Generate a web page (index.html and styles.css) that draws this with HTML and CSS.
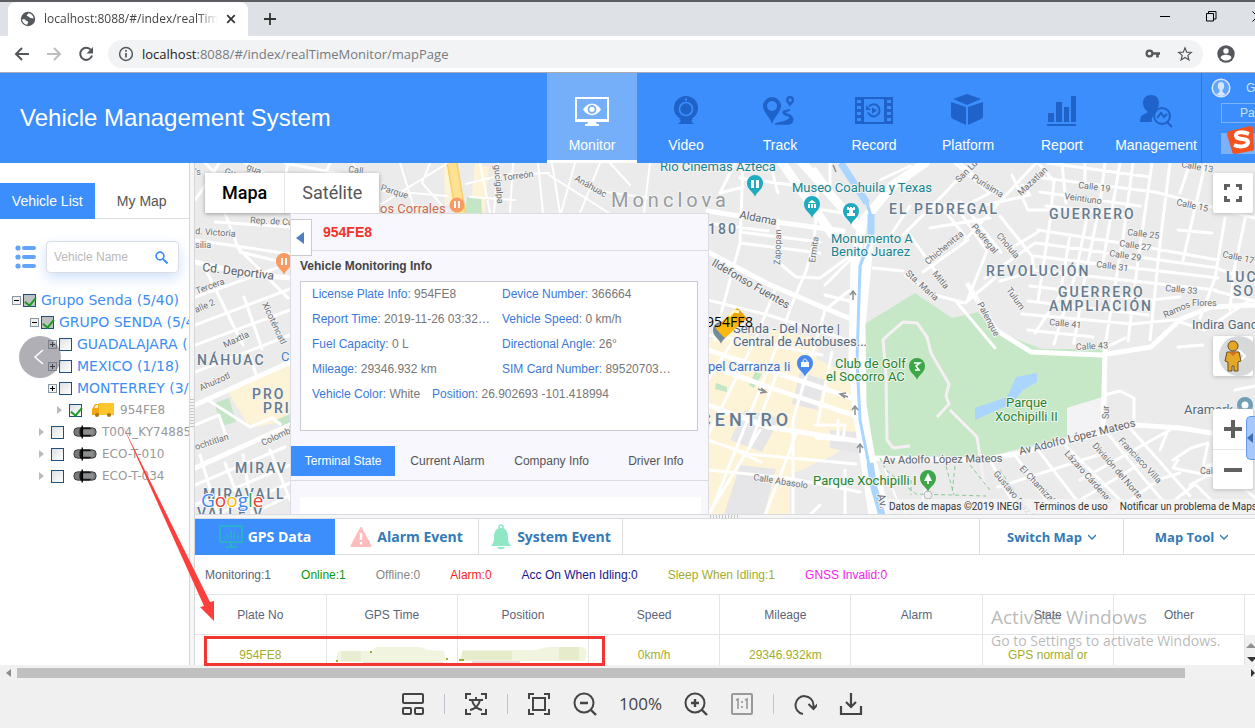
FILE: index.html
```html
<!DOCTYPE html>
<html lang="en">
<head>
<meta charset="utf-8">
<title>Vehicle Management System</title>
<link rel="stylesheet" href="styles.css">
</head>
<body>
<div class="tabstrip">
  <div class="tabstrip-edge"></div>
  <div class="browser-tab">
    <svg class="globe" width="16" height="16" viewBox="0 0 16 16"><circle cx="8" cy="8" r="7.200" fill="#54585c"/><path d="M2.200 8.500c1.600-.6 3-.2 3.800 1 .6 1 2 .4 2.200 1.600.1 1-1 1.400-.8 2.700-3-.3-5.200-2.600-5.200-5.300zM8.500 2.200c-.2 1-1.600 1-1.800 2 0 1.400 2.200.8 2.800 2 .6 1.400 2.400.6 4.100 1.400C13.400 4.600 11.500 2.400 8.500 2.200z" fill="#fff"/></svg>
    <span class="tab-title">localhost:8088/#/index/realTimeM</span>
    <button class="plain" aria-label="Close tab"><svg width="10" height="10" viewBox="0 0 10 10"><path d="M1.200 1.200l7.600 7.600M8.800 1.200L1.200 8.800" stroke="#333" stroke-width="1.700"/></svg></button>
  </div>
  <button class="plain new-tab" aria-label="New tab"><svg width="12" height="12" viewBox="0 0 12 12"><path d="M6 0v12M0 6h12" stroke="#333" stroke-width="1.800"/></svg></button>
  <div class="window-buttons">
    <button class="plain" aria-label="Minimize"><svg width="11" height="11" viewBox="0 0 11 11"><path d="M0 5.500h10" stroke="#000"/></svg></button>
    <button class="plain" aria-label="Restore"><svg width="11" height="11" viewBox="0 0 11 11"><path d="M.5 2.500h7v7.500h-7zM2.500 2.500v-2h7.500v7.500H7.500" fill="none" stroke="#000"/></svg></button>
    <button class="plain" aria-label="Close window"><svg width="11" height="11" viewBox="0 0 11 11"><path d="M.5.5l10 10M10.500.5l-10 10" stroke="#000"/></svg></button>
  </div>
</div>
<div class="toolbar">
  <button class="plain" aria-label="Back"><svg width="16" height="16" viewBox="0 0 16 16"><path d="M15 8H2.500M8 2L2 8l6 6" fill="none" stroke="#54585c" stroke-width="2"/></svg></button>
  <button class="plain" aria-label="Forward"><svg width="16" height="16" viewBox="0 0 16 16"><path d="M1 8h12.500M8 2l6 6-6 6" fill="none" stroke="#bbbdbf" stroke-width="2"/></svg></button>
  <button class="plain" aria-label="Reload"><svg width="16" height="16" viewBox="0 0 16 16"><path d="M13 4.200A6 6 0 1 0 14 9.500" fill="none" stroke="#54585c" stroke-width="2"/><path d="M15 1v6.500H8.500z" fill="#54585c"/></svg></button>
  <div class="address">
    <svg width="16" height="16" viewBox="0 0 16 16"><circle cx="8" cy="8" r="6.400" fill="none" stroke="#54585c" stroke-width="1.500"/><path d="M8 7v4.500M8 4v1.700" stroke="#54585c" stroke-width="1.700"/></svg>
    <span class="url"><b>localhost</b>:8088/#/index/realTimeMonitor/mapPage</span>
    <svg width="16" height="10" viewBox="0 0 16 10"><circle cx="4.500" cy="4.500" r="2.900" fill="none" stroke="#54585c" stroke-width="2.200"/><path d="M7 4.500h8M12.500 4v4.500" stroke="#54585c" stroke-width="2.600"/></svg>
    <svg width="16" height="16" viewBox="0 0 16 16"><path d="M8 1.800l1.700 4.300 4.600.3-3.500 3 1.100 4.500L8 11.500l-3.900 2.400 1.100-4.500-3.500-3 4.600-.3z" fill="none" stroke="#54585c" stroke-width="1.200"/></svg>
  </div>
  <svg class="profile" width="18" height="18" viewBox="0 0 18 18"><circle cx="9" cy="9" r="8.700" fill="#54585c"/><circle cx="9" cy="6" r="2.700" fill="#fff"/><path d="M3.600 13c0-4.300 10.800-4.300 10.800 0-2.700 3.400-8.100 3.400-10.800 0z" fill="#fff"/></svg>
</div>

<header class="app-header">
  <h1>Vehicle Management System</h1>
  <nav>
    <a class="nav-item active" href="#monitor"><svg width="36" height="36" viewBox="0 0 36 36"><path d="M2 5h32v23H2z" fill="none" stroke="#fff" stroke-width="2"/><path d="M2 26h32v2.500H2zM15 28h6l2 3h2v2H11v-2h2z" fill="#fff"/><path d="M9 16.500c5-8 13-8 18 0-5 7.500-13 7.500-18 0z" fill="#fff"/><circle cx="18" cy="16.300" r="3.500" fill="none" stroke="#74aff9" stroke-width="1.800"/></svg>Monitor</a>
    <a class="nav-item" href="#video"><svg width="36" height="36" viewBox="0 0 36 36"><circle cx="18" cy="15" r="12" fill="#1f62c9"/><circle cx="18" cy="16" r="6.500" fill="none" stroke="#3b8efb" stroke-width="1.700"/><circle cx="18" cy="6.500" r="1.200" fill="#3b8efb"/><path d="M11 26h14l-2 2 3 3H10l3-3z" fill="#1f62c9"/></svg>Video</a>
    <a class="nav-item" href="#track"><svg width="36" height="36" viewBox="0 0 36 36"><path fill-rule="evenodd" d="M10 31C8 24 1 19 1 13a9 9 0 0 1 18 0c0 6-7 11-9 18zM10 8a5 5 0 1 0 .1 0zM28 14c-1-3-4-4-4-7a3.900 3.900 0 0 1 8 0c0 3-3 4-4 7zM28 5.200a1.800 1.800 0 1 0 .1 0z" fill="#1f62c9"/><path d="M28 17c-12 1-6 5-1 6 4 2-2 6-14 8h13c6-1 6-7 1-9-6-2-6-3 1-5z" fill="#1f62c9" stroke="#1f62c9" stroke-width="1.500"/></svg>Track</a>
    <a class="nav-item" href="#record"><svg class="wide" width="38" height="36" viewBox="0 0 38 36"><path fill-rule="evenodd" d="M0 4h38v27H0zM9 6v23h20V6zM2 7v3h4V7zM2 13v3h4v-3zM2 19v3h4v-3zM2 25v3h4v-3zM32 7v3h4V7zM32 13v3h4v-3zM32 19v3h4v-3zM32 25v3h4v-3z" fill="#1f62c9"/><path d="M14 13.500a6 6 0 1 1-1 6" fill="none" stroke="#1f62c9" stroke-width="2"/><path d="M11 12v5h5zM17 14.500v6l5-3z" fill="#1f62c9"/></svg>Record</a>
    <a class="nav-item" href="#platform"><svg width="36" height="36" viewBox="0 0 36 36"><path d="M17 1l14 5-14 6L3 6zM1 9l15 5v18L3 26c-2-1-2-2-2-4zM33 9l-15 5v18l13-6c2-1 2-2 2-4z" fill="#1f62c9"/></svg>Platform</a>
    <a class="nav-item" href="#report"><svg width="36" height="36" viewBox="0 0 36 36"><path d="M4 20h6v9H4zM12 9h6v20h-6zM20 14h5v15h-5zM27 3h5v26h-5zM3 31h29v2H3z" fill="#1f62c9"/></svg>Report</a>
    <a class="nav-item" href="#management"><svg width="36" height="36" viewBox="0 0 36 36"><path d="M13 2c5 0 8 3 8 8 0 4-2 7-3 9-3 2-5 7-4 10H2c0-8 4-7 8-10-3-2-5-5-5-9 0-5 3-8 8-8z" fill="#1f62c9"/><circle cx="24" cy="23" r="8" fill="none" stroke="#1f62c9" stroke-width="2"/><path d="M19 25l4-5 3 4 3-3M29 29l5 5" stroke="#1f62c9" stroke-width="2" fill="none"/></svg>Management</a>
  </nav>
  <div class="user-area">
    <div class="user-row"><svg width="20" height="20" viewBox="0 0 20 20"><circle cx="10" cy="10" r="8.800" fill="#63a5fb" stroke="#d5e5fb" stroke-width="1.600"/><ellipse cx="10" cy="8" rx="3.200" ry="4" fill="#d5e5fb"/><path d="M8.500 11h3v3l3 2c-3 2.500-6 2.500-9 0l3-2z" fill="#d5e5fb"/></svg><span>Grupo</span></div>
    <button class="pass">Password</button>
    <div class="ime"><svg width="28" height="28" viewBox="0 0 28 28"><path d="M4 5L24 0c2 0 3 1 3 3l1 19c0 2-1 3-3 3L9 28c-2 0-3-1-3-3L1 9c0-2 1-4 3-4z" fill="#f4511e"/><path d="M23 8c-6-3-14-2-13 2 1 5 12 1 12 6 0 4-7 6-14 3" fill="none" stroke="#fff" stroke-width="4"/></svg></div>
  </div>
</header>

<main class="app">
  <aside class="sidebar">
    <div class="side-tabs"><button class="on">Vehicle List</button><button>My Map</button></div>
    <div class="search-row">
      <svg width="22" height="24" viewBox="0 0 22 24"><g fill="#62a3fb"><circle cx="3" cy="3" r="2.600"/><circle cx="3" cy="12" r="2.600"/><circle cx="3" cy="21" r="2.600"/><rect x="7" y="1" width="14" height="4" rx="2"/><rect x="7" y="10" width="14" height="4" rx="2"/><rect x="7" y="19" width="14" height="4" rx="2"/></g></svg>
      <div class="search"><input type="text" placeholder="Vehicle Name" aria-label="Vehicle Name"><button class="plain" aria-label="Search"><svg width="13" height="13" viewBox="0 0 13 13"><circle cx="5" cy="5" r="3.900" fill="none" stroke="#3b8efb" stroke-width="1.700"/><path d="M8 8l4.500 4.500" stroke="#3b8efb" stroke-width="2"/></svg></button></div>
    </div>
    <div class="tree">
      <div class="node l1"><i class="exp minus"></i><input type="checkbox" id="t1" class="grey" checked><label for="t1">Grupo Senda (5/40)</label></div>
      <div class="node l2"><i class="exp minus"></i><input type="checkbox" id="t2" class="grey" checked><label for="t2">GRUPO SENDA (5/40)</label></div>
      <div class="node l3"><i class="exp"></i><input type="checkbox" id="t3"><label for="t3">GUADALAJARA (1/8)</label></div>
      <div class="node l3"><i class="exp"></i><input type="checkbox" id="t4"><label for="t4">MEXICO (1/18)</label></div>
      <div class="node l3"><i class="exp"></i><input type="checkbox" id="t5"><label for="t5">MONTERREY (3/14)</label></div>
      <div class="node car l4"><i class="tri"></i><input type="checkbox" id="t6" checked><svg width="24" height="16" viewBox="0 0 24 16"><path d="M8 1h15v12H8z" fill="#fdc62d"/><path d="M1 13V7l3-5h4v11z" fill="#f3aa12"/><path d="M3 6l2-3h2v3z" fill="#fff3c4"/><circle cx="6" cy="13" r="2" fill="#a8770a"/><circle cx="18" cy="13" r="2" fill="#a8770a"/></svg><label for="t6">954FE8</label></div>
      <div class="node car"><i class="tri"></i><input type="checkbox" id="t7"><svg width="24" height="14" viewBox="0 0 26 14"><use href="#car"/></svg><label for="t7">T004_KY74885</label></div>
      <div class="node car"><i class="tri"></i><input type="checkbox" id="t8"><svg width="24" height="14" viewBox="0 0 26 14"><use href="#car"/></svg><label for="t8">ECO-T-010</label></div>
      <div class="node car"><i class="tri"></i><input type="checkbox" id="t9"><svg width="24" height="14" viewBox="0 0 26 14"><use href="#car"/></svg><label for="t9">ECO-T-034</label></div>
    </div>
    <button class="collapse" aria-label="Previous"><svg width="12" height="18" viewBox="0 0 12 18"><path d="M10 2L2 9l8 7" fill="none" stroke="#fff" stroke-width="1.600"/></svg></button>
  </aside>
  <div class="vsplit"><i></i></div>

  <section class="content">
    <div class="map">
      <svg class="map-art" viewBox="195 163 1060 352" preserveAspectRatio="xMinYMin slice">
        <defs>
          <g id="car"><rect x="1" y="2.500" width="24" height="9" rx="4" fill="#77797b" stroke="#333"/><path d="M8 2h10l2 2v6l-2 2H8l-1-3V5z" fill="#161616"/><rect x="11" y="4" width="11" height="6" fill="#8b8d8f"/><path d="M10 0v14" stroke="#000" stroke-width="1.500"/></g>
          <path id="pin" d="M0 13C-1 8-8 6-8-1a8 8 0 0 1 16 0C8 6 1 8 0 13z"/>
        </defs>
        <rect x="195" y="163" width="1060" height="352" fill="#ebebeb"/>
        <path d="M228 392l62-30v58l-40 8zM475 163l14 4-5 50-14-4zM444 163h9l4 42h-12zM708 340l30-8 60 18 52 25 6 60-22 20-44 20v40h-82zM718 326l30 10-8 20-32-10zM770 330l50 8-4 24-50-10z" fill="#fdf3d7"/>
        <path d="M745 410l35 8-18 34-32-12zM800 372l25 8-8 30-25-6zM740 465l36 4-12 46h-40zM830 430l26 2 6 22-32-6z" fill="#e6e6e8"/>
        <path d="M214 403l15-5 7 24-14 4zM276 420l14-6v14l-8-2zM467 197h14l1 16h-17zM755 372l7 2-8 14-5-3zM716 383l11 4v5l-12-3z" fill="#c4e5c6"/>
        <path d="M915 293l-52 32 1 60 4 40 8 32 50 2 60-2 81-20v-29l36-11 2-48h-63l-49-19-15-18-26 6z" fill="#c6e8c7"/>
        <path d="M1067 408l36-11v32l-36 8z" fill="#f3f3f5"/>
        <path d="M975 408l32-11 9-20 21-4v9l-14 8-10 13-38 17z" fill="#a9d5fe"/>
        <g fill="none" stroke="#fff" stroke-linejoin="round" stroke-linecap="round" stroke-width="3">
          <path d="M195 200l14-20 10-17M222 205l16 43 50 50M205 268l38 77M215 222l75 5M195 240l95 14M240 252l50 12M195 297l90-32M195 325l95-36M195 345l95-35M195 372l95-37M208 400l42 27 22-9 8 6M262 349l-18-52M257 377l-7-20M195 425l24-10 8 24M243 455l10 60M225 463l20 52M195 485l90-38M195 505l95-40M215 515l75-32M250 515l40-20M270 450l20 50M200 455l18 60M205 163l20 20M245 163l22 12M285 163l60 12M288 163l-10 50M330 163l-20 50"/>
          <path d="M353 163l32 48M380 205l68-42M377 190l70 6M400 163l14 45M430 163l-8 20 25 28M466 184l40-10 43-1M470 197l45 3M498 163l-4 50M513 163l-3 50M538 163l5 50M552 163l8 50M575 163l-14 50M549 175l60 38M600 163l-20 50M610 163l20 22M650 163l-6 50M590 190l60 8M480 163l10 50" stroke-width="2"/>
          <path d="M743 163l-3 80-18 67-7 30M770 163l8 30M818 185l-4 58-8 28-14 33-22 60-40 100-20 50M778 220v42l18 15 24 1 30-22M740 232l80 10M740 243l80 10M708 223l60 8M708 300l60 15 90 28M708 335l54 8 60 12M735 163l-15 30 23-6M740 178l60 8M810 208l40 6M850 290l-25 20-10 35M825 295l32 8M815 345l-22 75v95M775 290l-20 50-47 95M855 255l-30 30M708 440l40 14 108 10M708 470l80 8 72 14M760 430l-52 85M832 352l-14 70M797 432l-32 83M735 450l26 12M838 420v20M815 425h30l-2 15-27-2M740 330l-32 50M780 365l-30 80M820 505l-10 10M845 470v45M830 163v36"/>
          <path d="M873 268l30 3M903 235l40-40 30-32M910 206l-20 30-22 10M910 235l35 50M905 275l30 20 30 8 30-25M944 210l24 30-45 32M926 210l35-8 40 50M955 205l32 46-20 50M955 163l35 30-40 20M965 240l55-60 16-17M985 205l45-10-8-10M1000 216l32 40 2 15-34 10M985 278l50-35M955 300l40 48M1008 250l30-18M990 190l-30-27M1012 175l16 35h40M1038 163l16 18-4 40-12 80M1062 163l4 40M1085 163v20M880 180l30-14M990 218l-60 10"/>
          <path d="M1105 163l-5 40-16 80-10 60M1133 163l-10 75-18 108v60M1152 163l-14 98-10 80M1170 163l-10 80-10 97M1088 212l-12 60-22 72M1070 235l-10 60-25 38M1120 163l-18 105M1035 177l120 15 100 26M1040 192l100 14M1048 163l102 14M1046 206l84 9M1038 230l90 14 90 16M1036 243l182 25M1034 256l184 22M1032 270l184 20M1030 286l120 14 30-3M1028 301l120 14M1022 314l110 10 50-5M1028 330l65 7M1190 163l-10 30M1205 165l-22 95M1225 218l-10 60-15 40M1178 230l34 3M1246 215l-12 55-4 40M1216 268l39 14M1215 291l40 10"/>
          <path d="M1105 348l20-10M1250 300l-45 30-25-8M1203 345l-25 2M1105 395l15-4 14 7v25M1168 430l-8 20M1105 430l40 50 30 35M1130 428l60 68M1060 440l60 60M1038 450l50 65M1015 455l38 55M990 460l24 45M998 487l100-32M1080 480l90-50M1080 500l60-36M1235 390l20-4M1173 460l18-12 17-5-5 24 18-5-10 14-38-8 5-8M1190 485l32-17 33 30M1175 500l20-16 20 20M1110 515l50-36 20-6"/>
          <path d="M885 470l12 30 10 15M925 490l-6 25" stroke-width="2"/>
          <g stroke-width="5"><path d="M195 262l50 12 45 4M195 405l100-45M195 468l95-43M708 211l75 12 60 8M708 252l60 32 90 38M708 365l60 22 85 28M708 405l60 22 90 14M815 170l40 55M968 285l28 45 35 22 70 3 50-8 30-28 30-12 44-2M1105 350l-2 80M868 458l117 2 40-8 110-27 45 3 75 12M708 350l150 50"/></g>
          <g stroke-width="9"><path d="M800 160l58 66M925 163l-32 22-30 36-8 40-2 100 4 50 8 50 8 54M869 245l-8 80 1 80 8 50 16 60M780 160l52 74"/></g>
        </g>
        <path d="M452 163l9 52" stroke="#f6cf69" stroke-width="11"/><path d="M452 163l9 52" stroke="#fde293" stroke-width="8"/>
        <path d="M841 163l9 16 17 24 5 17v16l-12 30-3 94 3 60 6 30 7 35 10 30" fill="none" stroke="#a9d5fe" stroke-width="3"/><path d="M841 163l26 40M871 214v20M870 463l4 25 8 27" stroke="#a9d5fe" stroke-width="7" fill="none"/>
        <path d="M893 448l17-2M893 448l-6-8-1-65-3-35 7-7 13-11 14 1 10 14 4 16 18 31-3 12 3 8-12 13M950 410l27 27 7 46" fill="none" stroke="#f6f0f5" stroke-width="3"/>
        <path d="M880 458l6 12 30 24 70 2M946 466l8 29M955 466l-3 28M970 465l20 25M911 480v15M1000 470l20 30M890 500l15 15" fill="none" stroke="#86c996" stroke-dasharray="4 3"/><circle cx="928" cy="495" r="4" fill="#eee" stroke="#bbb"/>
        <g stroke="#8b8f94" fill="none" stroke-width="1.500"><path d="M853 300v-9m-3 4l3-4 3 4M855 415v-9m-3 4l3-4 3 4M860 453v-9m-3 4l3-4 3 4M758 389l8 3m-5-4l5 4-6 1M848 397l-8-3m5 4l-5-4 6-1M836 172l-3-7"/></g>
        <g class="street">
          <text x="224" y="174" transform="rotate(15 224 174)">Gu</text><text x="246" y="169" transform="rotate(22 246 169)">gua</text><text x="195" y="175">'s</text>
          <text x="348" y="172" transform="rotate(8 348 172)">Call</text><text x="380" y="190" transform="rotate(18 380 190)">Parque</text><text x="503" y="181" transform="rotate(-8 503 181)">Torreón</text><text x="574" y="180" transform="rotate(30 574 180)">Anáhuac</text><text x="494" y="165" transform="rotate(85 494 165)">gucigalpa</text>
          <text x="250" y="223" transform="rotate(3 250 223)">Rep. de Cuba</text><text x="195" y="234" transform="rotate(4 195 234)">d. Victoria</text><text x="195" y="248">silia</text><text x="197" y="294" transform="rotate(-20 197 294)">Tercera</text><text x="196" y="313" transform="rotate(-24 196 313)">alle 2</text><text x="262" y="304" transform="rotate(65 262 304)">Xicoténcatl</text><text x="225" y="348" transform="rotate(-25 225 348)">Maxtla</text><text x="201" y="391" transform="rotate(-24 201 391)">Ahuizotl</text><text x="196" y="450" transform="rotate(-18 196 450)">ochtitlan</text><text x="263" y="446" transform="rotate(-25 263 446)">Colombia</text>
          <text x="780" y="265" transform="rotate(-88 780 265)">Zapopan</text><text x="815" y="263" transform="rotate(-82 815 263)">Ermita</text><text x="753" y="480" transform="rotate(9 753 480)">Calle Abasolo</text>
          <text x="959" y="183" transform="rotate(-45 959 183)">San Luis</text><text x="971" y="179" transform="rotate(32 971 179)">Purísima</text><text x="1021" y="196" transform="rotate(-43 1021 196)">Mazatlan</text><text x="971" y="227" transform="rotate(50 971 227)">Pedregal</text><text x="996" y="236" transform="rotate(50 996 236)">Cholula</text><text x="928" y="265" transform="rotate(-40 928 265)">Chichenitza</text><text x="932" y="274" transform="rotate(50 932 274)">Mitla</text><text x="905" y="274" transform="rotate(42 905 274)">Sta. María</text><text x="977" y="304" transform="rotate(62 977 304)">Palenque</text><text x="1006" y="290" transform="rotate(55 1006 290)">Tulum</text>
          <text x="1078" y="188" transform="rotate(7 1078 188)">Calle 19</text><text x="1064" y="199" transform="rotate(8 1064 199)">Veintiuno</text><text x="1181" y="167" transform="rotate(10 1181 167)">Calle 13</text><text x="1176" y="205" transform="rotate(12 1176 205)">Calle 15</text><text x="1127" y="235" transform="rotate(7 1127 235)">Calle 25</text><text x="1119" y="246" transform="rotate(9 1119 246)">Calle 27</text><text x="1109" y="256" transform="rotate(9 1109 256)">Calle 29</text><text x="1096" y="267" transform="rotate(8 1096 267)">Calle 31</text><text x="1222" y="257" transform="rotate(12 1222 257)">Calle 17</text><text x="1165" y="291" transform="rotate(6 1165 291)">Calle 33</text><text x="1049" y="325" transform="rotate(6 1049 325)">Calle 41</text><text x="1076" y="350" transform="rotate(-3 1076 350)">Calle 43</text><text x="1165" y="318" transform="rotate(-24 1165 318)">Ramos</text><text x="1192" y="306">Flores</text><text x="1109" y="419" transform="rotate(-90 1109 419)">Sur</text>
          <text x="993" y="474" transform="rotate(50 993 474)">Gustavo Díaz O.</text><text x="1019" y="469" transform="rotate(47 1019 469)">El Chamizal</text><text x="1064" y="454" transform="rotate(48 1064 454)">Lázaro Cárdenas</text><text x="1092" y="446" transform="rotate(49 1092 446)">División del Norte</text><text x="1118" y="441" transform="rotate(47 1118 441)">Francisco Villa</text><text x="1200" y="474">Calle</text>
        </g>
        <g class="road"><text x="202" y="271" transform="rotate(7 202 271)" class="s12">Cd. Deportiva</text><text x="739" y="218" transform="rotate(11 739 218)">Aldama</text><text x="711" y="265" transform="rotate(30 711 265)">Ildefonso Fuentes</text><text x="883" y="464" transform="rotate(-1 883 464)">Av Adolfo López Mateos</text><text x="1020" y="455" transform="rotate(-14 1020 455)">Av Adolfo López Mateos</text><text x="877" y="495" transform="rotate(75 877 495)">Av.</text></g>
        <g class="area"><text x="889" y="214">EL PEDREGAL</text><text x="1049" y="219">GUERRERO</text><text x="986" y="276">REVOLUCIÓN</text><text x="1058" y="297">GUERRERO</text><text x="1049" y="311">AMPLIACIÓN</text><text x="1226" y="282">LUCIO</text><text x="1233" y="296">SOTO</text><text x="708" y="234">180</text><text x="197" y="365">NÁHUAC</text><text x="252" y="399">PRO</text><text x="263" y="413">PRI</text><text x="235" y="473">MIRAV</text><text x="203" y="499">MIRAVALL</text><text x="197" y="518">VALLE V</text></g>
        <text class="city" x="611" y="207">Monclova</text><text class="centre" x="699" y="426">CENTRO</text>
        <g class="poi"><text x="660" y="171">Rio Cinemas Azteca</text><text x="792" y="192">Museo Coahuila y Texas</text><text x="831" y="243">Monumento A</text><text x="831" y="256">Benito Juarez</text>
          <g fill="#55697c"><text x="733" y="333">Senda - Del Norte |</text><text x="733" y="346">Central de Autobuses...</text><text x="1192" y="329">Indira Gandhi</text><text x="1184" y="414">Aramark</text></g>
          <text x="281" y="361" fill="#4a7fc0">C</text><text x="708" y="371" fill="#3f75c4">pel Carranza Ii</text><text x="380" y="213" fill="#c8694c">os Corrales</text>
          <g fill="#25852c"><text x="835" y="368">Club de Golf</text><text x="826" y="381">el Socorro AC</text><text x="1006" y="407">Parque</text><text x="995" y="421">Xochipilli II</text><text x="813" y="485">Parque Xochipilli I</text></g></g>
        <g fill="#1fabbf"><use href="#pin" x="755" y="184"/><use href="#pin" x="812" y="205"/><use href="#pin" x="851" y="212"/></g>
        <path d="M751 180h3v8h-3zM756 180h3v8h-3zM808 203l4-3 4 3zM808 204h2v4h-2zM811 204h2v4h-2zM814 204h2v4h-2zM847 207h2v1h1v-1h2v1h1v-1h2v3h-2v3h2v3h-8v-3h2v-3h-2z" fill="#fff"/>
        <use href="#pin" x="805" y="364" fill="#4688ee"/><path d="M801 362h8v5h-8z" fill="#fff"/><path d="M803 362c0-4 4-4 4 0" fill="none" stroke="#fff"/>
        <g fill="#3ca648"><use href="#pin" x="917" y="367"/><use href="#pin" x="928" y="479"/></g><path d="M914 363h6l-4 3 3 4h-4" fill="none" stroke="#fff" stroke-width="1.500"/><path d="M928 473l4 8h-3v3h-2v-3h-3z" fill="#fff"/>
        <use href="#pin" x="721" y="331" fill="#718b9a"/><use href="#pin" x="1245" y="406" fill="#6f9fb5"/><circle cx="1245" cy="405" r="3.500" fill="#fff"/>
        <circle cx="457" cy="205" r="7.500" fill="#f89a61"/><use href="#pin" x="284" y="262" fill="#f89a61"/><path d="M455 201v7M459 201v7M282 258v7M286 258v7" stroke="#fff" stroke-width="2"/>
        <g transform="rotate(-42 731 323)"><rect x="716" y="316" width="30" height="14" rx="2" fill="#fbb90f"/><rect x="737" y="316" width="9" height="14" rx="2" fill="#e8a20b"/></g><path d="M729 316l5-5 5 1" stroke="#fff6c0" stroke-width="3" fill="none"/>
        <text class="plate" x="706" y="327">954FE8</text>
        <text class="google" x="201" y="507"><tspan fill="#4285f4">G</tspan><tspan fill="#ea4335">o</tspan><tspan fill="#fbbc05">o</tspan><tspan fill="#4285f4">g</tspan><tspan fill="#34a853">l</tspan><tspan fill="#ea4335">e</tspan></text>
      </svg>
      <div class="map-type"><button class="on">Mapa</button><button>Satélite</button></div>
      <div class="map-ctl fullscreen"><button class="plain" aria-label="Fullscreen"><svg width="18" height="18" viewBox="0 0 18 18"><path d="M1.500 6V1.500H6M12 1.500h4.500V6M16.500 12v4.500H12M6 16.500H1.500V12" fill="none" stroke="#606060" stroke-width="3"/></svg></button></div>
      <div class="map-ctl pegman"><button class="plain" aria-label="Street View"><svg width="40" height="40" viewBox="0 0 40 40"><circle cx="26" cy="20" r="20" fill="#d7d8da"/><path d="M26 14l6 6-6 6" fill="none" stroke="#fff" stroke-width="2"/><circle cx="20" cy="10" r="5" fill="#e5a727" stroke="#65501e"/><path d="M14 16h12l2 9-3 1v9h-4v-5h-2v5h-4v-9l-3-1z" fill="#e5a727" stroke="#65501e"/><path d="M16 16h8l-4 4z" fill="#cf6e1d"/></svg></button></div>
      <div class="map-ctl zoom"><button class="plain" aria-label="Zoom in"><svg width="18" height="18" viewBox="0 0 18 18"><path d="M9 0v18M0 9h18" stroke="#606060" stroke-width="4"/></svg></button><button class="plain" aria-label="Zoom out"><svg width="18" height="18" viewBox="0 0 18 18"><path d="M0 9h18" stroke="#606060" stroke-width="4"/></svg></button></div>
      <button class="edge-tab" aria-label="Open panel"><svg width="8" height="10" viewBox="0 0 8 10"><path d="M6 0v10L0 5z" fill="#3e6eb4"/></svg></button>
      <div class="attribution"><span>Datos de mapas ©2019 INEGI</span><a href="#terms">Términos de uso</a><a href="#report-map">Notificar un problema de Maps</a></div>

      <section class="info">
        <div class="info-head"><button class="info-toggle" aria-label="Collapse panel"><svg width="8" height="12" viewBox="0 0 8 12"><path d="M8 0v12L0 6z" fill="#4f7fc0"/></svg></button><h2>954FE8</h2></div>
        <h3>Vehicle Monitoring Info</h3>
        <dl>
          <div><dt>License Plate Info:</dt> <dd>954FE8</dd></div><div><dt>Device Number:</dt> <dd>366664</dd></div>
          <div><dt>Report Time:</dt> <dd>2019-11-26 03:32:16</dd></div><div><dt>Vehicle Speed:</dt> <dd>0 km/h</dd></div>
          <div><dt>Fuel Capacity:</dt> <dd>0 L</dd></div><div><dt>Directional Angle:</dt> <dd>26°</dd></div>
          <div><dt>Mileage:</dt> <dd>29346.932 km</dd></div><div><dt>SIM Card Number:</dt> <dd>8952070312345</dd></div>
          <div class="full"><span><dt>Vehicle Color:</dt> <dd>White</dd></span><span><dt>Position:</dt> <dd>26.902693 -101.418994</dd></span></div>
        </dl>
        <div class="info-tabs"><button class="on">Terminal State</button><button>Current Alarm</button><button>Company Info</button><button>Driver Info</button></div>
        <div class="info-body"></div>
      </section>
    </div>
    <div class="hsplit"><i></i></div>

    <section class="data">
      <div class="data-tabs">
        <button class="on"><svg width="24" height="26" viewBox="0 0 24 26"><path d="M1 2h22v16H1zM12 18v4M6 23h12" fill="none" stroke="#2bb0cb" stroke-width="2"/><path d="M5 12v3M8.500 9v6M12 6v9M15.500 8v7M19 11v4" stroke="#2bb0cb" stroke-width="1.500"/></svg>GPS Data</button>
        <button><svg width="22" height="22" viewBox="0 0 22 22"><path d="M11 2l9.500 18h-19z" fill="#ffbcbc" stroke="#ffbcbc" stroke-width="2" stroke-linejoin="round"/><path d="M11 7v7M11 16v2.500" stroke="#fff" stroke-width="2.400"/></svg>Alarm Event</button>
        <button><svg width="22" height="26" viewBox="0 0 22 26"><circle cx="11" cy="3" r="2" fill="none" stroke="#91e7c5" stroke-width="1.600"/><path d="M11 4c6 0 7 5 7 10 0 4 1 5 3 8H1c2-3 3-4 3-8 0-5 1-10 7-10zM7 23h8c-1 3-7 3-8 0z" fill="#91e7c5"/></svg>System Event</button>
        <span class="fill"></span>
        <button class="drop">Switch Map<svg width="8" height="6" viewBox="0 0 8 6"><path d="M0 1l4 4 4-4" fill="none" stroke="#337ab7" stroke-width="1.300"/></svg></button>
        <button class="drop">Map Tool<svg width="8" height="6" viewBox="0 0 8 6"><path d="M0 1l4 4 4-4" fill="none" stroke="#337ab7" stroke-width="1.300"/></svg></button>
      </div>
      <div class="status"><span>Monitoring:1</span><span class="online">Online:1</span><span class="offline">Offline:0</span><span class="alarm">Alarm:0</span><span class="acc">Acc On When Idling:0</span><span class="sleep">Sleep When Idling:1</span><span class="gnss">GNSS Invalid:0</span></div>
      <div class="grid">
        <div class="table-wrap"><table>
          <thead><tr><th>Plate No</th><th>GPS Time</th><th>Position</th><th>Speed</th><th>Mileage</th><th>Alarm</th><th>State</th><th>Other</th></tr></thead>
          <tbody><tr><td>954FE8</td><td><svg class="smudge" width="112" height="18" viewBox="0 0 112 18"><path d="M2 5h34l4-4h44l8 3 16 1 2 10-18 1H4l-4-3z" fill="#f1f4df"/><path d="M5 5h20v10H5z" fill="#e9edd2"/><path d="M0 15h2M110 13h2M34 6h2" stroke="#a3ad2c" stroke-width="2"/><path d="M27 17h80" stroke="#deb7b7"/></svg></td><td><svg class="smudge" width="128" height="18" viewBox="0 0 128 18"><path d="M4 4h74l10-3h36l4 4-2 10H0z" fill="#f1f4df"/><path d="M3 5h50v9H3zM100 1h20v13h-20z" fill="#e6ebcc"/><path d="M0 14h5" stroke="#a3ad2c" stroke-width="2"/><path d="M13 16h48" stroke="#deb7b7"/></svg></td><td>0km/h</td><td>29346.932km</td><td></td><td>GPS normal or</td><td></td></tr></tbody>
        </table></div>
        <div class="gutter"><div class="steps"><svg width="10" height="6" viewBox="0 0 10 6"><path d="M1 6l5-5 4 4v1z" fill="#909090"/></svg><svg width="10" height="6" viewBox="0 0 10 6"><path d="M2 0h8v2L7 5z" fill="#333"/></svg></div></div>
      </div>
      <div class="watermark"><strong>Activate Windows</strong><span>Go to Settings to activate Windows.</span></div>
    </section>
  </section>
</main>

<div class="scrollbar"><svg width="5" height="8" viewBox="0 0 5 8"><path d="M5 0v8L0 4z" fill="#8c8c8c"/></svg><div class="track"><div class="thumb"></div></div><svg width="4" height="8" viewBox="0 0 4 8"><path d="M0 0v8l4-4z" fill="#333"/></svg></div>
<footer class="viewer">
  <button class="plain" aria-label="Layout"><svg width="24" height="24" viewBox="0 0 24 24"><g fill="none" stroke="#444" stroke-width="2"><rect x="2" y="2" width="20" height="9" rx="1"/><rect x="2" y="16" width="8" height="6" rx="1"/><rect x="14" y="16" width="8" height="6" rx="1"/></g></svg></button>
  <i></i>
  <button class="plain" aria-label="Recognize text"><svg width="24" height="24" viewBox="0 0 24 24"><path d="M2 7V2h5M17 2h5v5M22 17v5h-5M7 22H2v-5M5 8h14M12 5v3M8 8c1 5 5 9 10 10M16 8c-1 5-5 9-10 10" fill="none" stroke="#444" stroke-width="2"/></svg></button>
  <i></i>
  <button class="plain" aria-label="Fit"><svg width="24" height="24" viewBox="0 0 24 24"><path d="M2 7V2h5M17 2h5v5M22 17v5h-5M7 22H2v-5M6 6h12v12H6z" fill="none" stroke="#444" stroke-width="2"/></svg></button>
  <button class="plain" aria-label="Zoom out"><svg width="24" height="24" viewBox="0 0 24 24"><circle cx="11" cy="11" r="9.500" fill="none" stroke="#444" stroke-width="2"/><path d="M7 11h8M18 18l5 5" stroke="#444" stroke-width="2.400"/></svg></button>
  <span>100%</span>
  <button class="plain" aria-label="Zoom in"><svg width="24" height="24" viewBox="0 0 24 24"><circle cx="11" cy="11" r="9.500" fill="none" stroke="#444" stroke-width="2"/><path d="M7 11h8M11 7v8M18 18l5 5" stroke="#444" stroke-width="2.400"/></svg></button>
  <button class="plain" aria-label="Actual size"><svg width="24" height="24" viewBox="0 0 24 24"><rect x="2" y="2" width="20" height="20" rx="1" fill="none" stroke="#999" stroke-width="2"/><path d="M6 8l2-1v10M15 8l2-1v10M12 9v2M12 14v2" fill="none" stroke="#999" stroke-width="1.600"/></svg></button>
  <i></i>
  <button class="plain" aria-label="Rotate"><svg width="24" height="24" viewBox="0 0 24 24"><path d="M10 22A9 9 0 1 1 20.500 13v3M15.500 12l5 5L25 12" fill="none" stroke="#444" stroke-width="2"/></svg></button>
  <button class="plain" aria-label="Save"><svg width="24" height="24" viewBox="0 0 24 24"><path d="M12 1v13M7 10l5 5 5-5M2 14v8h20v-8" fill="none" stroke="#444" stroke-width="2.200"/></svg></button>
</footer>
<svg class="annotation" width="620" height="680" viewBox="0 0 620 680"><path d="M122 424L210 602l4-1 0 20-14-14 4-1z" fill="#fc3f3c"/><rect x="205.500" y="637.500" width="398" height="27" fill="none" stroke="#f13530" stroke-width="3"/></svg>
</body>
</html>
```
FILE: styles.css
```css
* { box-sizing: border-box; }
body { margin: 0; height: 100vh; display: flex; flex-direction: column; overflow: hidden; position: relative; font: 12px/16px "Liberation Sans", Arial, sans-serif; color: #555; background: #fff; }
button { font: inherit; color: inherit; border: 0; padding: 0; background: none; }
svg { flex: none; display: block; }
a { color: inherit; text-decoration: none; }
.plain { display: flex; align-items: center; justify-content: center; flex: none; }

.tabstrip { flex: none; display: flex; align-items: stretch; height: 36px; background: #dee1e6; border-top: 2px solid #5c5e61; }
.tabstrip-edge { width: 8px; }
.browser-tab { width: 240px; display: flex; align-items: center; gap: 8px; padding: 0 12px; background: #fff; border-radius: 8px 8px 0 0; }
.tab-title { flex: 1; overflow: hidden; white-space: nowrap; font: 12px/18px "Open Sans", sans-serif; color: #444; mask-image: linear-gradient(90deg, #000 88%, transparent); }
.new-tab { margin-left: 16px; }
.window-buttons { margin-left: auto; margin-right: -8px; display: flex; gap: 35px; padding-bottom: 5px; }
.toolbar { flex: none; display: flex; align-items: center; gap: 16px; height: 37px; padding: 0 20px 1px 14px; border-bottom: 1px solid #a9abae; }
.address { flex: 1; display: flex; align-items: center; height: 28px; margin-left: -2px; padding: 0 10px; border-radius: 14px; background: #f1f3f4; gap: 8px; }
.url { flex: 1; font: 13px/20px "Open Sans", sans-serif; color: #777b80; }
.url b { font-weight: 400; color: #222; }
.address svg:last-child { margin-left: 8px; }
.profile { margin-left: -2px; }

.app-header { flex: none; display: flex; height: 90px; background: #3b8efb; color: #fff; overflow: hidden; }
h1 { flex: 1; margin: 0; padding-left: 20px; font-size: 24px; line-height: 90px; font-weight: 400; white-space: nowrap; }
nav { display: flex; gap: 4px; }
.nav-item { width: 90px; display: flex; flex-direction: column; align-items: center; padding-top: 20px; gap: 8px; font-size: 14px; line-height: 16px; border-bottom: 3px solid transparent; }
.nav-item.active { background: #76aff9; border-color: #fff; }
.user-area { width: 54px; border-left: 1px solid #2f75d4; padding: 5px 0 0 9px; color: #cfe2fc; overflow: hidden; display: flex; flex-direction: column; align-items: flex-start; }
.user-row { display: flex; align-items: center; gap: 15px; height: 20px; }
.pass { margin: 5px 0 0 10px; width: 80px; flex: none; height: 20px; padding-left: 18px; border: 1px solid #7cb4fc; text-align: left; }
.ime { margin: 10px 0 0 10px; width: 80px; height: 21px; background: #7cb1f8; padding-left: 5px; display: flex; align-items: flex-end; flex: none; }

.app { flex: 1; min-height: 0; display: flex; }
.sidebar { position: relative; width: 189px; flex: none; overflow: hidden; }
.side-tabs { margin-top: 20px; height: 36px; display: flex; border-bottom: 1px solid #ddd; font-size: 14px; }
.side-tabs button { flex: 1; }
.side-tabs .on { background: #3b8efb; color: #fff; height: 36px; }
.search-row { display: flex; align-items: center; gap: 9px; padding: 22px 10px 0 15px; }
.search { flex: 1; min-width: 0; height: 32px; display: flex; align-items: center; padding: 0 10px 0 7px; border: 1px solid #dbdde4; border-radius: 4px; background: #fff; box-shadow: 0 5px 14px #cfe1fb; }
.search input { flex: 1; min-width: 0; border: 0; outline: 0; padding: 0; font: inherit; }
.search input::placeholder { color: #b9b9bc; }
.tree { margin-top: 16px; }
.node { height: 22px; display: flex; align-items: center; white-space: nowrap; font: 14px/18px "DejaVu Sans", sans-serif; color: #3d8ef2; padding-left: 12px; }
.l2 { padding-left: 30px; }
.l3 { padding-left: 48px; }
.node input { appearance: none; flex: none; width: 13px; height: 13px; margin: 0 5px 0 2px; border: 1px solid #1d5180; background: linear-gradient(135deg, #dde0e3, #fff); position: relative; }
.node input.grey { background: #bcc1c1; }
.node input:checked::after { content: ""; position: absolute; left: 3px; top: 0; width: 5px; height: 9px; border: solid #1f9b26; border-width: 0 2px 2px 0; transform: rotate(40deg); }
.exp { flex: none; position: relative; width: 9px; height: 9px; border: 1px solid #8797a8; background: linear-gradient(#000, #000) center / 5px 1px no-repeat, linear-gradient(#000, #000) center / 1px 5px no-repeat, #f2f0ec; }
.exp.minus { background: linear-gradient(#000, #000) center / 5px 1px no-repeat, #f2f0ec; }
.node.car { padding-left: 39px; font-size: 12px; color: #999; }
.node.car.l4 { padding-left: 57px; }
.node.car input { margin: 0 9px 0 7px; }
.car label { margin-left: 5px; }
.tri { border: 4px solid transparent; border-left: 5px solid #bbb; border-right: 0; flex: none; }
.collapse { position: absolute; left: 19px; top: 173px; width: 42px; height: 42px; border-radius: 21px; background: rgba(110, 110, 120, .55); display: flex; align-items: center; justify-content: center; padding-right: 3px; }
.vsplit { width: 6px; flex: none; border: solid #d5d7da; border-width: 0 1px; background: #f6f6f6; display: flex; align-items: center; }
.vsplit i { width: 4px; height: 30px; background: repeating-linear-gradient(#c4c4c4 0 1px, #f6f6f6 1px 3px); }

.content { flex: 1; min-width: 0; display: flex; flex-direction: column; }
.map { flex: 1; min-height: 0; position: relative; overflow: hidden; }
.map-art { width: 100%; height: 100%; font-family: Roboto, sans-serif; }
.map-art text { paint-order: stroke; stroke: #f4f4f4; stroke-width: 2px; stroke-linejoin: round; }
.street { font-size: 9px; fill: #6d6f72; }
.road { font-size: 11px; fill: #5d6368; }
.road .s12 { font-size: 12px; }
.area { font-size: 14px; font-weight: 500; letter-spacing: 2px; fill: #667b8d; }
.city { font-size: 20px; letter-spacing: 4px; fill: #979ca1; }
.centre { font-size: 18px; font-weight: 500; letter-spacing: 4px; fill: #667b8d; }
.poi { font-size: 13px; fill: #198591; }
.map-art .plate { font: 14px "Open Sans", sans-serif; fill: #000; stroke: none; }
.map-art .google { font: 500 19px "Open Sans", sans-serif; stroke: #fff; }
.map-type { position: absolute; left: 10px; top: 10px; height: 40px; display: flex; background: #fff; box-shadow: 0 1px 4px #999; font: 18px/24px Roboto, sans-serif; color: #565656; }
.map-type button { padding: 0 17px; }
.map-type .on { color: #000; font-weight: 500; border-right: 1px solid #e6e6e6; }
.map-ctl { position: absolute; right: 2px; width: 40px; background: #fff; border-radius: 2px; box-shadow: 0 1px 4px #bbb; overflow: hidden; }
.map-ctl button { width: 40px; height: 40px; }
.fullscreen { top: 10px; }
.pegman { bottom: 138px; }
.zoom { bottom: 25px; }
.zoom button + button { border-top: 1px solid #e6e6e6; }
.edge-tab { position: absolute; right: 0; bottom: 54px; width: 9px; height: 44px; background: #a9c8fa; border: 1px solid #6398ea; border-right: 0; border-radius: 5px 0 0 5px; display: flex; align-items: center; }
.attribution { position: absolute; right: -2px; bottom: 0; display: flex; gap: 12px; padding-left: 2px; background: rgba(245, 245, 245, .8); font: 10px/15px Roboto, sans-serif; color: #333; white-space: nowrap; }
.info { position: absolute; left: 95px; top: 50px; bottom: 0; width: 419px; background: #f7f7fd; border: 1px solid #dcdce4; border-bottom: 0; overflow: hidden; display: flex; flex-direction: column; }
.info-head { height: 37px; flex: none; border-bottom: 1px solid #dcdce4; display: flex; align-items: flex-start; gap: 11px; }
.info-toggle { width: 22px; height: 37px; flex: none; margin: 5px 0 0 -1px; border: 1px solid #c9cad3; background: #fff; display: flex; align-items: center; padding-left: 5px; }
h2 { margin: 0; font-size: 14px; line-height: 37px; color: #f23325; }
h3 { margin: 7px 0 7px 9px; font-size: 12px; line-height: 16px; color: #444; }
dl { flex: none; margin: 0 10px 0 9px; padding: 0 10px 23px 11px; border: 1px solid #c9cad3; background: #fff; display: grid; grid-template-columns: 190px 1fr; line-height: 25px; color: #777; }
dl div { overflow: hidden; white-space: nowrap; text-overflow: ellipsis; padding-right: 10px; }
dl .full { grid-column: 1 / 3; display: flex; gap: 12px; }
dt, dd { display: inline; margin: 0; }
dt { color: #3b79d8; }
.info-tabs { display: flex; flex: none; margin: 15px 0 0; padding-bottom: 4px; border-bottom: 1px solid #dcdce4; }
.info-tabs button { flex: 1; height: 30px; }
.info-tabs .on { background: #3b8efb; color: #fff; }
.info-body { flex: 1; margin: 16px 7px 0 9px; background: #fff; }

.hsplit { height: 5px; flex: none; background: #f6f6f6; border: solid #d9dbde; border-width: 1px 0; display: flex; justify-content: center; }
.hsplit i { width: 30px; background: repeating-linear-gradient(90deg, #c4c4c4 0 1px, #f6f6f6 1px 3px); }
.data { height: 146px; flex: none; overflow: hidden; position: relative; }
.data-tabs { height: 36px; display: flex; border-bottom: 1px solid #ddd; font: 700 14px/18px "Open Sans", sans-serif; color: #337ab7; }
.data-tabs button { width: 144px; display: flex; align-items: center; justify-content: center; gap: 5px; border-right: 1px solid #ddd; }
.data-tabs .on { width: 140px; height: 36px; background: #3b8efb; color: #fff; border: 0; }
.data-tabs .fill { flex: 1; border-right: 1px solid #ddd; }
.data-tabs .drop { gap: 6px; font-size: 13px; }
.data-tabs .drop:last-child { width: 131px; border: 0; padding-left: 4px; }
.status { height: 39px; display: flex; align-items: center; gap: 30px; padding-left: 10px; color: #5b6478; white-space: nowrap; }
.online { color: #0a9a0a; }
.offline { color: #888; }
.alarm { color: #fb1f1f; }
.acc { color: #17178c; }
.sleep { color: #a3ad2c; }
.gnss { color: #f222e8; }
.grid { display: flex; align-items: stretch; }
.table-wrap { flex: 1; min-width: 0; }
table { width: 100%; table-layout: fixed; border-collapse: collapse; text-align: center; color: #5b6478; }
th, td { height: 40px; padding: 0; border: solid #e3e4e8; border-width: 1px 1px 0 0; font-weight: 400; }
td { color: #a3ad2c; }
.smudge { margin: 0 auto; }
.gutter { width: 10px; border-top: 1px solid #e3e4e8; padding-top: 40px; }
.steps { height: 40px; background: #f1f1f1; display: flex; flex-direction: column; gap: 9px; padding-top: 7px; }
.watermark { position: absolute; right: 27px; bottom: 14px; display: flex; flex-direction: column; width: 237px; white-space: nowrap; color: rgba(125, 125, 125, .55); font: 14px/21px "Open Sans", sans-serif; }
.watermark strong { font-weight: 400; font-size: 19px; line-height: 26px; }

.scrollbar { flex: none; height: 15px; display: flex; align-items: center; justify-content: space-between; background: #f1f1f1; padding: 0 0 0 6px; }
.track { flex: 1; padding: 0 66px 0 6px; }
.thumb { height: 10px; background: #c0c0c0; }
.viewer { flex: none; height: 48px; display: flex; align-items: center; justify-content: center; gap: 22px; padding-left: 9px; background: #f0f0f0; font: 17px/24px "Open Sans", sans-serif; color: #444; }
.viewer i { width: 1px; height: 20px; margin: 0 -3px; background: #c3c3cc; }
.annotation { position: absolute; left: 0; top: 0; pointer-events: none; }
```
